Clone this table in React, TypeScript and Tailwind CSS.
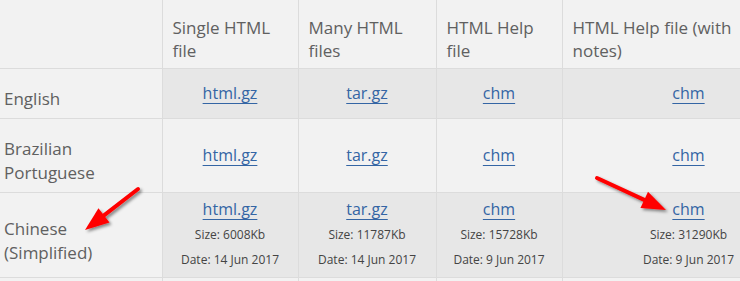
import React from "react";

type Cell = { href: string; size?: string; date?: string };

const rows: { lang: string[]; cells: Cell[]; shade: boolean }[] = [
  {
    lang: ["English"],
    shade: true,
    cells: [{ href: "html.gz" }, { href: "tar.gz" }, { href: "chm" }, { href: "chm" }],
  },
  {
    lang: ["Brazilian", "Portuguese"],
    shade: false,
    cells: [{ href: "html.gz" }, { href: "tar.gz" }, { href: "chm" }, { href: "chm" }],
  },
  {
    lang: ["Chinese", "(Simplified)"],
    shade: true,
    cells: [
      { href: "html.gz", size: "6008Kb", date: "14 Jun 2017" },
      { href: "tar.gz", size: "11787Kb", date: "14 Jun 2017" },
      { href: "chm", size: "15728Kb", date: "9 Jun 2017" },
      { href: "chm", size: "31290Kb", date: "9 Jun 2017" },
    ],
  },
];

const headers = [
  ["Single HTML", "file"],
  ["Many HTML", "files"],
  ["HTML Help", "file"],
  ["HTML Help file (with", "notes)"],
];

const widths = ["w-[162px]", "w-[136px]", "w-[138px]", "w-[126px]", "w-[253px]"];

const Arrow = ({ x1, y1, x2, y2 }: { x1: number; y1: number; x2: number; y2: number }) => {
  const a = Math.atan2(y2 - y1, x2 - x1);
  const len = 24;
  const half = 9;
  const bx = x2 - len * Math.cos(a);
  const by = y2 - len * Math.sin(a);
  const px = -Math.sin(a) * half;
  const py = Math.cos(a) * half;
  return (
    <g>
      <line x1={x1} y1={y1} x2={bx} y2={by} stroke="#ff0000" strokeWidth={4} strokeLinecap="round" />
      <polygon points={`${x2},${y2} ${bx + px},${by + py} ${bx - px},${by - py}`} fill="#ff0000" />
    </g>
  );
};

export default function App() {
  return (
    <div
      className="relative w-[740px] h-[281px] overflow-hidden bg-[#f2f2f2] text-[#606060]"
      style={{ fontFamily: '"Open Sans", "Noto Sans", sans-serif' }}
    >
      <table className="border-collapse w-[815px] table-fixed">
        <thead>
          <tr className="h-[68px]">
            {["", ...headers.map((h) => h.join(" "))].map((_, i) => (
              <th
                key={i}
                className={`${widths[i]} border border-[#dcdcdc] border-t-0 border-l-0 align-bottom text-left font-normal text-[17px] leading-[23px] px-[10px] pb-[6px]`}
              >
                {i > 0 && (
                  <>
                    {headers[i - 1][0]}
                    <br />
                    {headers[i - 1][1]}
                  </>
                )}
              </th>
            ))}
          </tr>
        </thead>
        <tbody>
          {rows.map((r, ri) => (
            <tr
              key={ri}
              className={ri === 0 ? "h-[50px]" : ri === 1 ? "h-[74px]" : "h-[85px]"}
            >
              <td className="border border-[#dcdcdc] border-l-0 align-middle pl-[4px] pt-[12px] text-[17px] leading-[24px]">
                {r.lang.map((l, i) => (
                  <div key={i}>{l}</div>
                ))}
              </td>
              {r.cells.map((c, ci) => (
                <td
                  key={ci}
                  className={`border border-[#dcdcdc] align-middle text-center ${r.shade ? "bg-[#e7e7e7]" : ""}`}
                >
                  <a
                    href="#"
                    className="text-[16px] leading-[24px] text-[#3465a4] underline decoration-1 underline-offset-[4px]"
                  >
                    {c.href}
                  </a>
                  {c.size && (
                    <div className="text-[12px] leading-[25px] text-[#444] mt-[1px]">
                      <div>Size: {c.size}</div>
                      <div>Date: {c.date}</div>
                    </div>
                  )}
                </td>
              ))}
            </tr>
          ))}
          <tr className="h-[40px]">
            {widths.map((_, i) => (
              <td key={i} className="border border-[#dcdcdc] border-l-0"></td>
            ))}
          </tr>
        </tbody>
      </table>
      <svg className="absolute inset-0 pointer-events-none" width={740} height={281}>
        <defs>
          <filter id="sh" x="-20%" y="-20%" width="140%" height="140%">
            <feDropShadow dx="2" dy="2" stdDeviation="1.5" floodColor="#000" floodOpacity="0.45" />
          </filter>
        </defs>
        <g filter="url(#sh)">
          <Arrow x1={138} y1={189} x2={85} y2={230} />
          <Arrow x1={597} y1={178} x2={666} y2={210} />
        </g>
      </svg>
    </div>
  );
}
